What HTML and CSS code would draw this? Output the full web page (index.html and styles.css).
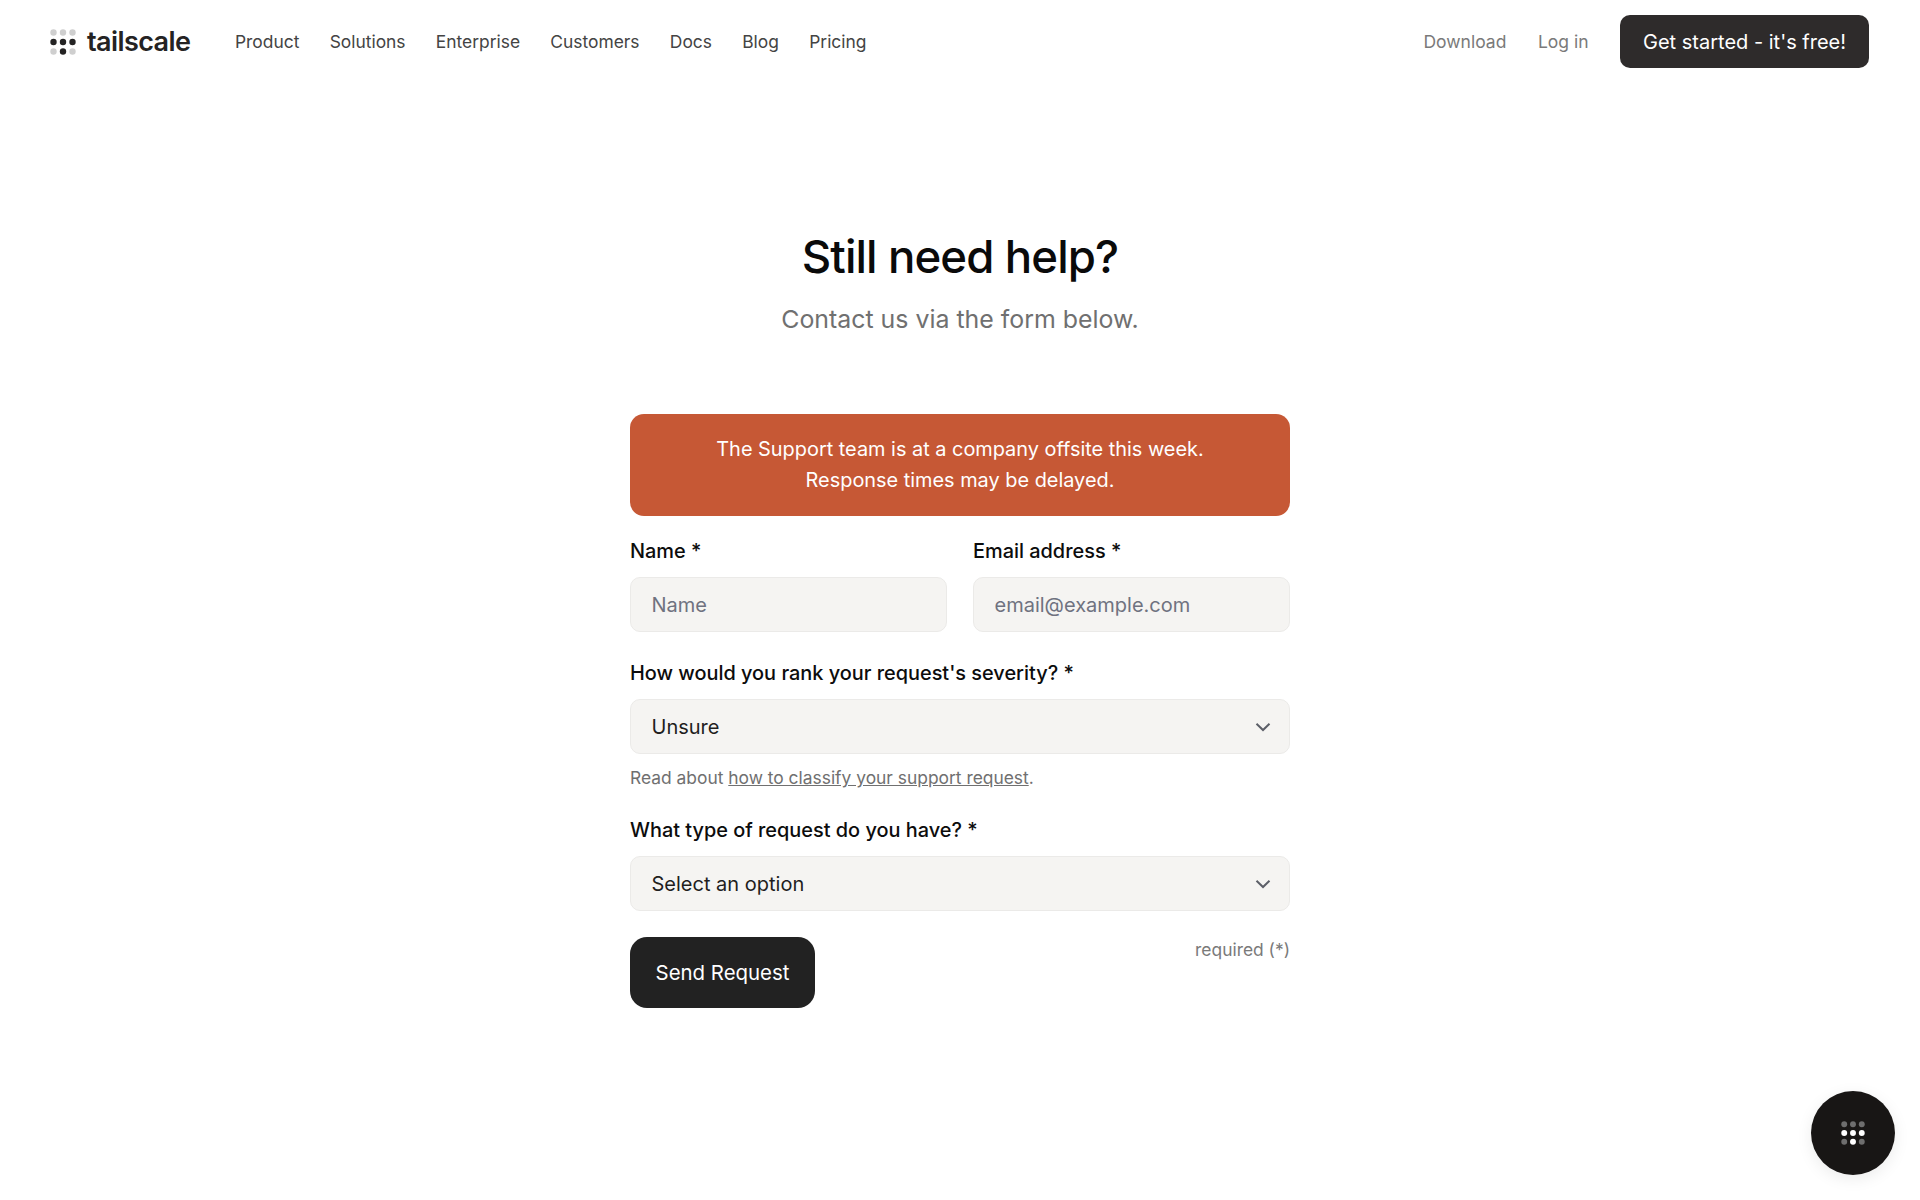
FILE: index.html
```html
<!DOCTYPE html>
<html lang="en">
<head>
<meta charset="utf-8">
<title>Still need help? - Tailscale</title>
<link rel="stylesheet" href="styles.css">
</head>
<body>
<header class="site-header">
  <a class="logo" href="#">
    <svg class="logo-mark" viewBox="0 0 26 26" width="26" height="26" aria-hidden="true">
      <circle class="dim" cx="3.5" cy="3.5" r="3.2"/><circle class="dim" cx="13" cy="3.5" r="3.2"/><circle class="dim" cx="22.5" cy="3.5" r="3.2"/>
      <circle cx="3.5" cy="13" r="3.2"/><circle cx="13" cy="13" r="3.2"/><circle cx="22.5" cy="13" r="3.2"/>
      <circle class="dim" cx="3.5" cy="22.5" r="3.2"/><circle cx="13" cy="22.5" r="3.2"/><circle class="dim" cx="22.5" cy="22.5" r="3.2"/>
    </svg>
    <span class="logo-word">tailscale</span>
  </a>
  <nav class="main-nav">
    <a href="#">Product</a><a href="#">Solutions</a><a href="#">Enterprise</a><a href="#">Customers</a><a href="#">Docs</a><a href="#">Blog</a><a href="#">Pricing</a>
  </nav>
  <div class="header-actions">
    <a class="muted-link" href="#">Download</a>
    <a class="muted-link" href="#">Log in</a>
    <a class="cta" href="#">Get started - it's free!</a>
  </div>
</header>

<main class="content">
  <h1 class="title">Still need help?</h1>
  <p class="subtitle">Contact us via the form below.</p>

  <form class="form">
    <div class="alert">The Support team is at a company offsite this week.<br>Response times may be delayed.</div>
    <div class="two-col">
      <div class="field">
        <label class="label" for="name">Name *</label>
        <input class="control" id="name" placeholder="Name">
      </div>
      <div class="field">
        <label class="label" for="email">Email address *</label>
        <input class="control" id="email" placeholder="email@example.com">
      </div>
    </div>
    <div class="field sev">
      <label class="label">How would you rank your request's severity? *</label>
      <div class="control select">
        <span>Unsure</span>
        <svg class="chev" viewBox="0 0 16 10" width="16" height="10" aria-hidden="true"><path d="M1.5 1.8 8 8l6.5-6.2"/></svg>
      </div>
      <p class="help">Read about <a href="#">how to classify your support request</a>.</p>
    </div>
    <div class="field type">
      <label class="label">What type of request do you have? *</label>
      <div class="control select">
        <span>Select an option</span>
        <svg class="chev" viewBox="0 0 16 10" width="16" height="10" aria-hidden="true"><path d="M1.5 1.8 8 8l6.5-6.2"/></svg>
      </div>
    </div>
    <div class="form-foot">
      <button class="send" type="button">Send Request</button>
      <span class="required">required (*)</span>
    </div>
  </form>
</main>

<button class="fab" type="button" aria-label="Open chat">
  <svg viewBox="0 0 26 26" width="24" height="24" aria-hidden="true">
    <circle class="dim" cx="3.5" cy="3.5" r="3.2"/><circle class="dim" cx="13" cy="3.5" r="3.2"/><circle class="dim" cx="22.5" cy="3.5" r="3.2"/>
    <circle cx="3.5" cy="13" r="3.2"/><circle cx="13" cy="13" r="3.2"/><circle cx="22.5" cy="13" r="3.2"/>
    <circle class="dim" cx="3.5" cy="22.5" r="3.2"/><circle cx="13" cy="22.5" r="3.2"/><circle class="dim" cx="22.5" cy="22.5" r="3.2"/>
  </svg>
</button>
</body>
</html>
```

FILE: styles.css
```css
* { box-sizing: border-box; }
html, body { margin: 0; padding: 0; }
body {
  background: #fff;
  color: #1f1e1e;
  font-family: Inter, "Liberation Sans", sans-serif;
  height: 1200px;
  overflow: hidden;
  position: relative;
}
a { color: inherit; text-decoration: none; }

.site-header {
  display: flex;
  align-items: center;
  height: 83px;
  padding: 0 51px 0 50px;
}
.logo { display: flex; align-items: center; gap: 11px; width: 185px; }
.logo-mark circle { fill: #242323; }
.logo-mark .dim { fill: #cfcfcf; }
.logo-word { font-size: 27px; font-weight: 600; letter-spacing: -0.6px; color: #242323; }
.main-nav { display: flex; gap: 30.3px; font-size: 17.4px; color: #444; }
.header-actions { margin-left: auto; display: flex; align-items: center; }
.muted-link { font-size: 17.5px; color: #7a7a7a; margin-right: 31.5px; }
.cta {
  display: flex; align-items: center;
  height: 53px; padding: 0 23px;
  background: #2e2b2b; color: #fff;
  border-radius: 10px;
  font-size: 20px; font-weight: 400;
}

.content { display: flex; flex-direction: column; align-items: center; padding-top: 143px; }
.title { margin: 0; font-size: 45.6px; line-height: 62px; font-weight: 500; letter-spacing: -0.9px; color: #0a0a0a; }
.subtitle { margin: 0; padding-top: 13px; font-size: 24.9px; line-height: 36px; color: #707070; }

.form { width: 660px; margin-top: 77px; }
.alert {
  height: 102px; padding-top: 20px;
  background: #c65835; color: #fff;
  border-radius: 14px;
  text-align: center;
  font-size: 19.9px; line-height: 31px;
}
.two-col { display: grid; grid-template-columns: 1fr 1fr; gap: 26px; margin-top: 21px; }
.label { display: block; font-size: 19.9px; line-height: 28px; font-weight: 500; color: #0c0c0c; margin-bottom: 12px; }
.control {
  display: block; width: 100%; height: 55px;
  padding: 0 20.5px;
  background: #f5f4f2;
  border: 1px solid #ebeae8;
  border-radius: 10px;
  font: 400 20px Inter, "Liberation Sans", sans-serif;
  color: #1f1e1e;
}
.control::placeholder { color: #6f7280; opacity: 1; }
.select { display: flex; align-items: center; justify-content: space-between; }
.chev { fill: none; stroke: #5c5f68; stroke-width: 2; margin-right: -2.5px; }
.sev { margin-top: 27px; }
.help { margin: 12px 0 0; font-size: 17.4px; line-height: 24px; color: #707070; }
.help a { text-decoration: underline; }
.type { margin-top: 26px; }
.form-foot { display: flex; justify-content: space-between; align-items: flex-start; margin-top: 26px; }
.send {
  width: 185px; height: 71px;
  background: #222; color: #fff;
  border: 0; border-radius: 17px;
  font: 400 20.4px Inter, "Liberation Sans", sans-serif;
}
.required { font-size: 17.4px; line-height: 24px; color: #7a7a7a; margin-top: 1px; }

.fab {
  position: absolute; right: 25px; bottom: 25px;
  display: flex; align-items: center; justify-content: center;
  width: 84px; height: 84px;
  border: 0; border-radius: 50%;
  background: #181615;
  box-shadow: 0 4px 16px rgba(0,0,0,.08);
}
.fab circle { fill: #fff; }
.fab .dim { fill: #6e6e6e; }
```
